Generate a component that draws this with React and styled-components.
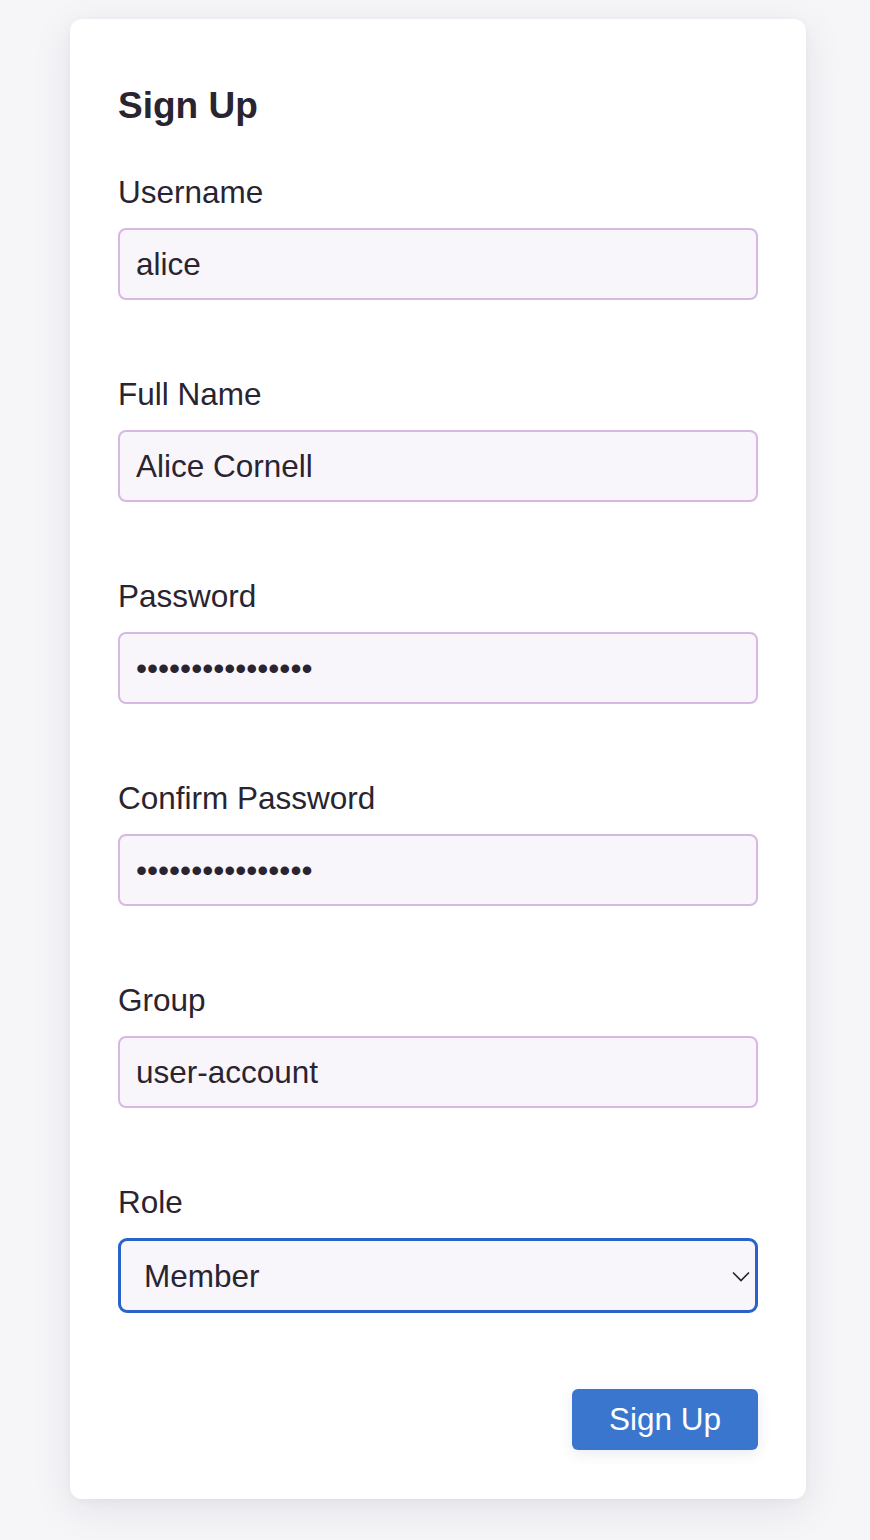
import React from "react";
import styled, { createGlobalStyle } from "styled-components";

const COLORS = {
  PAGE: "#f6f6f9",
  CARD: "#ffffff",
  TEXT: "#2a2431",
  FIELD_BG: "#f8f6fb",
  FIELD_BORDER: "#d6b8e2",
  FOCUS: "#2a62c9",
  BUTTON: "#3a76cd",
};

const GlobalStyle = createGlobalStyle`
  html, body {
    margin: 0;
    padding: 0;
    background: ${COLORS.PAGE};
    font-family: "Liberation Sans", Arial, Helvetica, sans-serif;
    color: ${COLORS.TEXT};
  }
`;

const Page = styled.div`
  padding: 19px 64px 40px 70px;
`;

const Card = styled.form`
  background: ${COLORS.CARD};
  border-radius: 12px;
  padding: 48px 48px 49px 48px;
  box-shadow: 0 10px 40px rgba(30, 30, 50, 0.09), 0 2px 8px rgba(30, 30, 50, 0.04);
  display: flex;
  flex-direction: column;
`;

const Title = styled.h2`
  margin: 17px 0 47px;
  font-size: 37px;
  line-height: 43px;
  font-weight: 700;
`;

const Field = styled.div`
  display: flex;
  flex-direction: column;
  margin-bottom: 76px;
`;

const Label = styled.label`
  font-size: 31.5px;
  line-height: 37px;
  margin-bottom: 17px;
`;

const Input = styled.input`
  box-sizing: border-box;
  height: 72px;
  width: 100%;
  padding: 0 16px;
  border: 2px solid ${COLORS.FIELD_BORDER};
  border-radius: 8px;
  background: ${COLORS.FIELD_BG};
  font-family: inherit;
  font-size: 31.5px;
  color: ${COLORS.TEXT};
  outline: none;
`;

const SelectWrap = styled.div`
  position: relative;
`;

const Select = styled.select`
  box-sizing: border-box;
  appearance: none;
  height: 75px;
  width: 100%;
  padding: 0 40px 0 23px;
  border: 3px solid ${COLORS.FOCUS};
  border-radius: 9px;
  background: ${COLORS.FIELD_BG};
  font-family: inherit;
  font-size: 31.5px;
  color: ${COLORS.TEXT};
  outline: none;
`;

const Chevron = styled.svg`
  position: absolute;
  right: 7px;
  top: 50%;
  transform: translateY(-50%);
  pointer-events: none;
`;

const Actions = styled.div`
  display: flex;
  justify-content: flex-end;
`;

const Button = styled.button`
  width: 186px;
  height: 61px;
  border: none;
  border-radius: 6px;
  background: ${COLORS.BUTTON};
  color: #ffffff;
  font-family: inherit;
  font-size: 31.5px;
  box-shadow: 0 4px 14px rgba(40, 60, 120, 0.1);
  cursor: pointer;
`;

const fields = [
  { label: "Username", type: "text", value: "alice" },
  { label: "Full Name", type: "text", value: "Alice Cornell" },
  { label: "Password", type: "password", value: "supersecretpass1" },
  { label: "Confirm Password", type: "password", value: "supersecretpass1" },
  { label: "Group", type: "text", value: "user-account" },
];

export default function App() {
  return (
    <Page>
      <GlobalStyle />
      <Card onSubmit={(e) => e.preventDefault()}>
        <Title>Sign Up</Title>
        {fields.map((f) => (
          <Field key={f.label}>
            <Label>{f.label}</Label>
            <Input type={f.type} defaultValue={f.value} />
          </Field>
        ))}
        <Field>
          <Label>Role</Label>
          <SelectWrap>
            <Select defaultValue="member">
              <option value="member">Member</option>
              <option value="admin">Admin</option>
            </Select>
            <Chevron width="20" height="12" viewBox="0 0 20 12" fill="none">
              <path d="M2 2.5l8 8 8-8" stroke={COLORS.TEXT} strokeWidth="1.7" />
            </Chevron>
          </SelectWrap>
        </Field>
        <Actions>
          <Button type="submit">Sign Up</Button>
        </Actions>
      </Card>
    </Page>
  );
}
